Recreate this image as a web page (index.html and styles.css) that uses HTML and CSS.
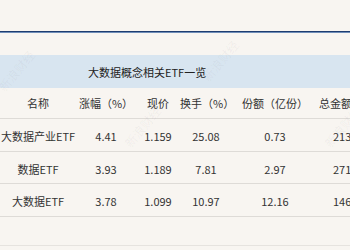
FILE: index.html
```html
<!DOCTYPE html>
<html lang="zh">
<head>
<meta charset="utf-8">
<link rel="stylesheet" href="styles.css">
</head>
<body>
<div class="page">
  <div class="topline"></div>
  <div class="band"><span class="title">大数据概念相关ETF一览</span></div>
  <div class="table">
    <div class="row head">
      <div class="c">名称</div><div class="c">涨幅（%）</div><div class="c">现价</div><div class="c">换手（%）</div><div class="c">份额（亿份）</div><div class="c last">总金额（亿元）</div>
    </div>
    <div class="row">
      <div class="c">大数据产业ETF</div><div class="c">4.41</div><div class="c">1.159</div><div class="c">25.08</div><div class="c">0.73</div><div class="c last num">213.52</div>
    </div>
    <div class="row">
      <div class="c">数据ETF</div><div class="c">3.93</div><div class="c">1.189</div><div class="c">7.81</div><div class="c">2.97</div><div class="c last num">271.46</div>
    </div>
    <div class="row">
      <div class="c">大数据ETF</div><div class="c">3.78</div><div class="c">1.099</div><div class="c">10.97</div><div class="c">12.16</div><div class="c last num">146.85</div>
    </div>
    <div class="row empty"></div>
  </div>
  <span class="wm w1">新浪财经</span>
  <span class="wm w2">新浪财经</span>
  <span class="wm w3">新浪财经</span>
  <span class="wm w4">新浪财经</span>
</div>
</body>
</html>
```
FILE: styles.css
```css
html, body {
  margin: 0;
  padding: 0;
  background: #f8f5f1;
}
.page {
  position: relative;
  width: 350px;
  height: 250px;
  overflow: hidden;
  padding-top: 31px;
  box-sizing: border-box;
  font-family: "Noto Sans CJK SC", "Noto Sans", sans-serif;
  font-size: 11px;
  color: #333;
}
.topline {
  height: 1px;
  background: #1e3c70;
  border-bottom: 1px solid #6f8db8;
  margin-bottom: 22px;
}
.band {
  height: 33px;
  background: #d8e5f0;
  display: flex;
  align-items: center;
  padding-left: 88px;
}
.title {
  font-size: 11px;
  color: #222;
}
.table {
  width: 400px;
}
.row {
  display: grid;
  grid-template-columns: 76px 60px 44px 52px 86px 82px;
  height: 33px;
  border-bottom: 1px solid #dedbd7;
  box-sizing: border-box;
  align-items: center;
}
.row.head {
  height: 31px;
  padding-top: 0;
}
.row:nth-child(3) {
  height: 32px;
}
.row.empty {
  height: 29px;
  border-bottom-color: #e6e3df;
}
.c {
  text-align: center;
  white-space: nowrap;
  padding-top: 2px;
}
.head .c {
  padding-top: 0;
}
.c.last {
  text-align: left;
  padding-left: 1px;
}
.c.num {
  padding-left: 15px;
}
.wm {
  position: absolute;
  font-size: 12px;
  color: rgba(120, 120, 140, 0.08);
  transform: rotate(-50deg);
  white-space: nowrap;
  pointer-events: none;
}
.w1 { left: -8px; top: 62px; }
.w2 { left: 118px; top: 118px; }
.w3 { left: 196px; top: 52px; }
.w4 { left: 318px; top: 118px; }
```
